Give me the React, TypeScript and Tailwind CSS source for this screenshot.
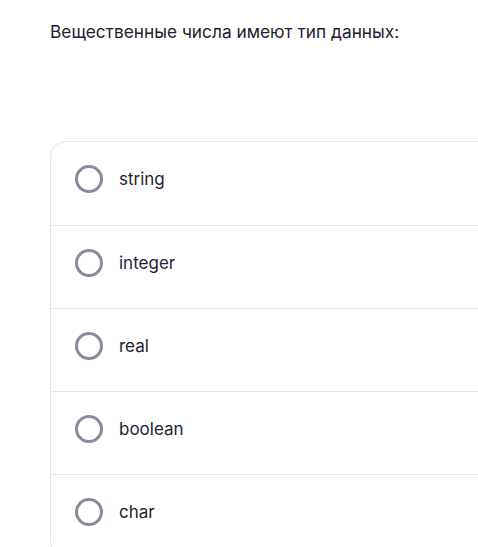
const options = ["string", "integer", "real", "boolean", "char"];

export default function App() {
  return (
    <div
      className="h-[547px] w-[478px] overflow-hidden bg-white"
      style={{ fontFamily: "Inter, 'Noto Sans', sans-serif" }}
    >
      <div className="pl-[50px] pt-[20px]">
        <p className="text-[17.3px] leading-6 text-[#1e2030]">
          Вещественные числа имеют тип данных:
        </p>
        <div className="mt-[97px] w-[520px] rounded-2xl border border-[#e6e6ea]">
          {options.map((o, i) => (
            <label
              key={o}
              className={`flex h-[83px] items-center gap-[16px] pb-[9px] pl-[24px] ${
                i > 0 ? "border-t border-[#e6e6ea]" : ""
              }`}
            >
              <span className="h-[28px] w-[28px] rounded-full border-[3px] border-[#8b8a9c]" />
              <span className="text-[17px] leading-6 text-[#1e2235]">{o}</span>
            </label>
          ))}
        </div>
      </div>
    </div>
  );
}
